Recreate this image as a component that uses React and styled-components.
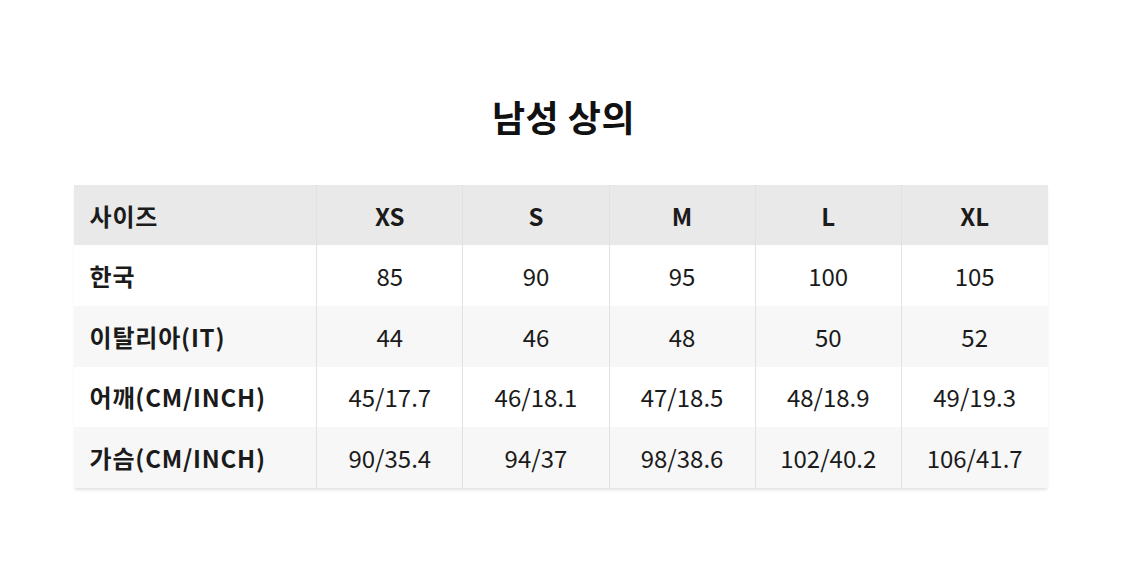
import React from "react";
import styled, { createGlobalStyle } from "styled-components";

const GlobalStyle = createGlobalStyle`
  html, body {
    margin: 0;
    padding: 0;
    background: #ffffff;
  }
  body {
    font-family: "Noto Sans CJK KR", "Noto Sans", sans-serif;
    color: #1b1b1b;
  }
`;

const Page = styled.div`
  width: 1125px;
  height: 572px;
  display: flex;
  flex-direction: column;
  align-items: center;
  padding-top: 92px;
  box-sizing: border-box;
`;

const Title = styled.h1`
  margin: 0 0 45px 0;
  font-size: 36px;
  line-height: 48px;
  font-weight: 700;
  letter-spacing: 0.5px;
  color: #111;
  transform: translateX(1px);
`;

const Table = styled.table`
  width: 974px;
  border-collapse: collapse;
  table-layout: fixed;
  box-shadow: 0 3px 3px -1px rgba(0, 0, 0, 0.12);
  transform: translateX(-2px);
`;

const Row = styled.tr`
  height: ${(p) => (p.$head ? "60px" : "60.75px")};
  background: ${(p) => (p.$head ? "#e9e9e9" : p.$shade ? "#f7f7f7" : "#ffffff")};
`;

const Cell = styled.td`
  padding: 0;
  font-size: 24px;
  font-weight: ${(p) => (p.$bold ? 700 : 400)};
  letter-spacing: ${(p) => (p.$label ? "0.8px" : "0")};
  text-align: ${(p) => (p.$label ? "left" : "center")};
  padding-left: ${(p) => (p.$label ? "16px" : "0")};
  border-left: ${(p) => (p.$label ? "none" : "1.5px solid #e2e2e2")};
  white-space: nowrap;
  color: #1b1b1b;
`;

const sizes = ["XS", "S", "M", "L", "XL"];

const rows = [
  { label: "한국", values: ["85", "90", "95", "100", "105"] },
  { label: "이탈리아(IT)", values: ["44", "46", "48", "50", "52"] },
  { label: "어깨(CM/INCH)", values: ["45/17.7", "46/18.1", "47/18.5", "48/18.9", "49/19.3"] },
  { label: "가슴(CM/INCH)", values: ["90/35.4", "94/37", "98/38.6", "102/40.2", "106/41.7"] },
];

const App = () => {
  return (
    <Page>
      <GlobalStyle />
      <Title>남성 상의</Title>
      <Table>
        <colgroup>
          <col style={{ width: "243px" }} />
          {sizes.map((s) => (
            <col key={s} style={{ width: "146px" }} />
          ))}
        </colgroup>
        <tbody>
          <Row $head>
            <Cell $label $bold>사이즈</Cell>
            {sizes.map((s) => (
              <Cell key={s} $bold>{s}</Cell>
            ))}
          </Row>
          {rows.map((r, i) => (
            <Row key={r.label} $shade={i % 2 === 1}>
              <Cell $label $bold>{r.label}</Cell>
              {r.values.map((v, j) => (
                <Cell key={j}>{v}</Cell>
              ))}
            </Row>
          ))}
        </tbody>
      </Table>
    </Page>
  );
};

export default App;
